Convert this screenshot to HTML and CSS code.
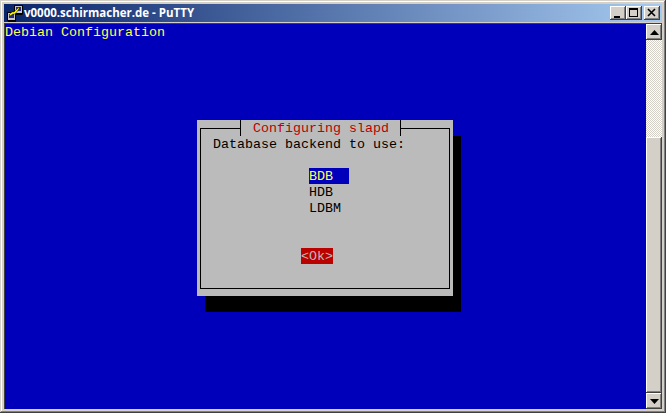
FILE: index.html
```html
<!DOCTYPE html>
<html lang="en">
<head>
<meta charset="utf-8">
<title>v0000.schirmacher.de - PuTTY</title>
<link rel="stylesheet" href="styles.css">
</head>
<body>
<div class="window">
  <div class="titlebar">
    <svg class="app-icon" width="16" height="17" viewBox="0 0 16 17">
      <rect x="7.5" y="0.5" width="8" height="8" fill="#c6c6c6" stroke="#000"/>
      <rect x="9" y="2" width="5" height="4" fill="#2a2a80"/>
      <path d="M8 9.5h7.5" stroke="#000"/>
      <rect x="0.5" y="7.5" width="8" height="8" fill="#c6c6c6" stroke="#000"/>
      <rect x="2" y="9" width="5" height="4" fill="#2a2a80"/>
      <path d="M1 16.5h8" stroke="#000"/>
      <path d="M12 2L7 7H5l-3 3 1 1 3-2h2l4-5z" fill="#ffff00" stroke="#000" stroke-width=".4"/>
    </svg>
    <span class="title-text">v0000.schirmacher.de - PuTTY</span>
    <div class="caption-buttons">
      <button class="cap-btn"><svg width="14" height="12" viewBox="0 0 14 12"><path d="M3 9h6v2H3z"/></svg></button>
      <button class="cap-btn"><svg width="14" height="12" viewBox="0 0 14 12"><path d="M2 1h9v9H2zM3 3v6h7V3z" fill-rule="evenodd"/></svg></button>
      <button class="cap-btn cap-close"><svg width="14" height="12" viewBox="0 0 14 12"><path d="M3 2l7 7M10 2l-7 7" stroke="#000" stroke-width="1.6" fill="none"/></svg></button>
    </div>
  </div>
  <div class="client">
    <div class="terminal">
      <div class="heading">Debian Configuration</div>
      <div class="dialog">
        <div class="frame"></div>
        <div class="dialog-title">Configuring slapd</div>
        <div class="prompt">Database backend to use:</div>
        <ul class="options">
          <li class="option selected">BDB</li>
          <li class="option">HDB</li>
          <li class="option">LDBM</li>
        </ul>
        <div class="ok">&lt;Ok&gt;</div>
      </div>
    </div>
    <div class="scrollbar">
      <button class="scroll-btn"><svg width="9" height="5" viewBox="0 0 9 5"><path d="M4.5 0L9 5H0z"/></svg></button>
      <div class="track"></div>
      <div class="thumb"></div>
      <button class="scroll-btn"><svg width="9" height="5" viewBox="0 0 9 5"><path d="M0 0h9L4.5 5z"/></svg></button>
    </div>
  </div>
</div>
</body>
</html>
```
FILE: styles.css
```css
* { box-sizing: border-box; }
html, body { margin: 0; padding: 0; }
body { width: 666px; height: 413px; overflow: hidden; background: #d4d0c8; }
button { padding: 0; margin: 0; font: inherit; }

.window {
  width: 666px;
  height: 413px;
  padding: 4px;
  background: #d4d0c8;
  display: flex;
  flex-direction: column;
  box-shadow: inset -1px -1px 0 #404040, inset 1px 1px 0 #d4d0c8, inset -2px -2px 0 #808080, inset 2px 2px 0 #fff;
}

.titlebar {
  height: 18px;
  flex: none;
  display: flex;
  align-items: center;
  padding: 0 2px 0 3px;
  background: linear-gradient(to right, #0a246a, #a6caf0);
}
.app-icon { flex: none; margin-right: 1px; }
.title-text {
  flex: 1;
  color: #fff;
  font: bold 11.5px/18px "Open Sans", sans-serif;
  white-space: nowrap;
}
.caption-buttons { display: flex; flex: none; }
.cap-btn {
  width: 16px;
  height: 14px;
  background: #d4d0c8;
  border: 0;
  box-shadow: inset -1px -1px 0 #404040, inset 1px 1px 0 #fff, inset -2px -2px 0 #808080;
  display: flex;
  align-items: center;
  justify-content: center;
}
.cap-close { margin-left: 2px; }

.client {
  flex: 1;
  min-height: 0;
  margin-top: 1px;
  display: flex;
  border-top: 1px solid #404040;
  border-left: 1px solid #404040;
}

.terminal {
  width: 641px;
  background: #0000bb;
  font: 13.33px/18px "Liberation Mono", "Courier New", monospace;
  color: #000;
}
.heading { height: 16px; color: #ffff55; }

.dialog {
  position: relative;
  width: 256px;
  height: 176px;
  margin: 80px 0 0 192px;
  background: #bbbbbb;
  box-shadow: 8px 16px 0 #000;
  padding: 16px 0 0 16px;
}
.frame {
  position: absolute;
  left: 3px;
  top: 8px;
  width: 250px;
  height: 161px;
  border: 1px solid #000;
}
.dialog-title {
  position: absolute;
  left: 43px;
  top: 0;
  width: 161px;
  height: 16px;
  padding-left: 12px;
  color: #bb0000;
  background: #bbbbbb;
  border-left: 1px solid #000;
  border-right: 1px solid #000;
}
.prompt { position: relative; height: 16px; }
.options { position: relative; list-style: none; margin: 16px 0 0 96px; padding: 0; }
.option { width: 40px; height: 16px; }
.option.selected { background: #0000bb; color: #ffff55; }
.ok {
  position: relative;
  width: 32px;
  height: 16px;
  margin: 32px 0 0 88px;
  background: #bb0000;
  color: #bbbbbb;
}

.scrollbar {
  width: 16px;
  flex: none;
  display: flex;
  flex-direction: column;
}
.scroll-btn {
  height: 16px;
  flex: none;
  background: #d4d0c8;
  border: 0;
  box-shadow: inset -1px -1px 0 #404040, inset 1px 1px 0 #fff, inset -2px -2px 0 #808080;
  display: flex;
  align-items: center;
  justify-content: center;
}
.track {
  height: 97px;
  flex: none;
  background: repeating-conic-gradient(#fff 0 25%, #d4d0c8 0 50%) 0 0 / 2px 2px;
}
.thumb {
  flex: 1;
  background: #d4d0c8;
  box-shadow: inset -1px -1px 0 #404040, inset 1px 1px 0 #fff, inset -2px -2px 0 #808080;
}
```
